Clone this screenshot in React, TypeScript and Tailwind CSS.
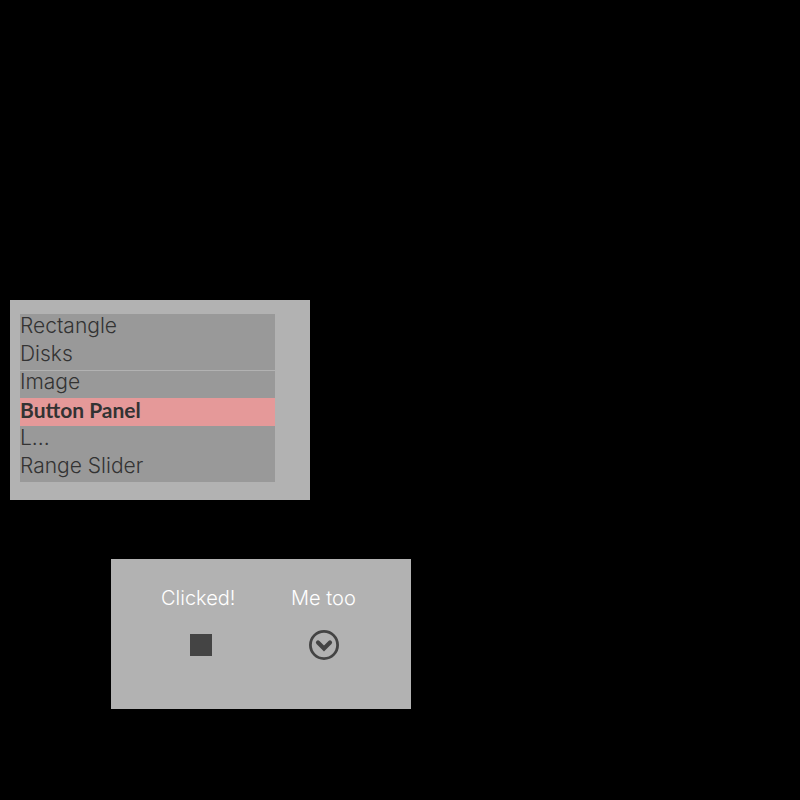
import React from "react";
import clsx from "clsx";

const items = ["Rectangle", "Disks", "Image", "Button Panel", "L...", "Range Slider"];

function ItemList() {
  const [selected, setSelected] = React.useState("Button Panel");
  return (
    <nav aria-label="Demos" className="w-full max-w-[300px] bg-[#b2b2b2] pt-3.5 pr-[35px] pb-[18px] pl-2.5">
      <ul>
        {items.map((item) => (
          <li key={item}>
            <button
              type="button"
              aria-pressed={item === selected}
              onClick={() => setSelected(item)}
              className={clsx(
                "flex h-7 w-full items-start text-left text-[21px] leading-6 text-[#333333]",
                item === selected
                  ? "bg-[#e59999] font-['Lato',sans-serif] font-bold"
                  : "bg-[#999999] font-light",
                item === "Image" && "shadow-[inset_0_1px_0_#b2b2b2]",
              )}
            >
              {item}
            </button>
          </li>
        ))}
      </ul>
    </nav>
  );
}

function ButtonPanel() {
  return (
    <section
      aria-label="Button Panel"
      className="ml-[101px] flex min-h-[150px] w-full max-w-[300px] items-start gap-[50px] bg-[#b2b2b2] pt-[27px] pl-[50px]"
    >
      <button type="button" className="w-20 text-left text-xl leading-6 font-light text-white">
        Clicked!
        <span className="mt-5 flex h-[30px] items-center justify-center">
          <span className="size-[22px] bg-[#444444]" />
        </span>
      </button>
      <button type="button" className="w-[66px] text-left text-xl leading-6 font-light whitespace-nowrap text-white">
        Me too
        <span className="mt-5 flex justify-center">
          <svg viewBox="0 0 30 30" className="size-[30px]" fill="none" stroke="#444444" aria-hidden="true">
            <circle cx="15" cy="15" r="13.6" strokeWidth="2.8" />
            <path d="M9 12.5 15 18.5 21 12.5" strokeWidth="4.2" strokeLinecap="round" />
          </svg>
        </span>
      </button>
    </section>
  );
}

export default function App() {
  return (
    <main className="flex min-h-screen flex-col gap-[59px] bg-black px-2.5 pt-[300px] font-['Inter',sans-serif]">
      <ItemList />
      <ButtonPanel />
    </main>
  );
}
